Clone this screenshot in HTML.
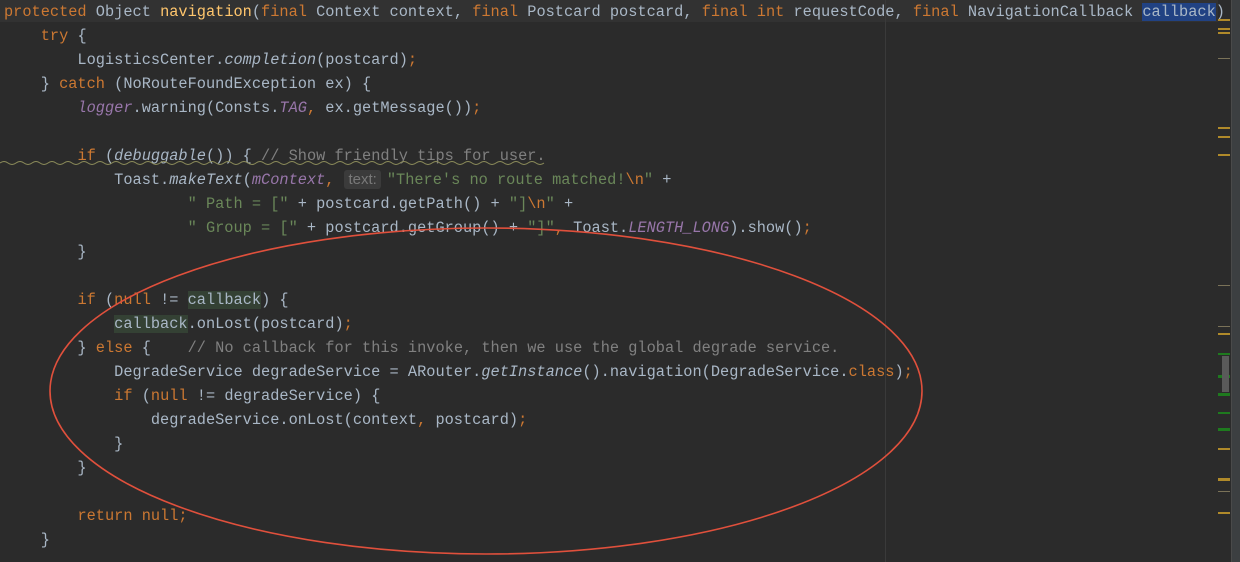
<!DOCTYPE html>
<html><head><meta charset="utf-8"><style>
html,body{margin:0;padding:0;background:#2b2b2b;width:1240px;height:562px;overflow:hidden}
pre{position:absolute;left:4px;top:0px;margin:0;font-family:"Liberation Mono",monospace;font-size:15.3px;line-height:24px;color:#a9b7c6;white-space:pre}
.k{color:#cc7832}.s{color:#6a8759}.c{color:#808080}.m{color:#ffc66d}.f{color:#9876aa;font-style:italic}.i{font-style:italic}
.hl{background:#344134}.sel{background:#214283}
.hint{display:inline-block;background:#3b3b3b;color:#787878;font-family:"Liberation Sans",sans-serif;font-size:15px;line-height:19px;padding:0 4px;border-radius:3px;margin:0 6px 0 10px}
.cur{position:absolute;left:0;top:0;width:1218px;height:22px;background:#323232}
.guide{position:absolute;left:885px;top:0;width:1px;height:562px;background:#3a3a3a}
.side{position:absolute;left:1231px;top:0;width:9px;height:562px;background:#3c3f41;border-left:1px solid #4a4a4a}
.mk{position:absolute;left:1218px;width:12px;height:2px}
</style></head><body>
<div class="cur"></div>
<div class="guide"></div>
<pre><span class="k">protected </span>Object <span class="m">navigation</span>(<span class="k">final </span>Context context, <span class="k">final </span>Postcard postcard, <span class="k">final int </span>requestCode, <span class="k">final </span>NavigationCallback <span class="sel">callback</span>)
    <span class="k">try </span>{
        LogisticsCenter.<span class="i">completion</span>(postcard)<span class="k">;</span>
    } <span class="k">catch </span>(NoRouteFoundException ex) {
        <span class="f">logger</span>.warning(Consts.<span class="f">TAG</span><span class="k">, </span>ex.getMessage())<span class="k">;</span>

        <span class="k">if </span>(<span class="i">debuggable</span>()) { <span class="c">// Show friendly tips for user.</span>
            Toast.<span class="i">makeText</span>(<span class="f">mContext</span><span class="k">,</span><span class="hint">text:</span><span class="s">"There's no route matched!<span class="k">\n</span>"</span> +
                    <span class="s">" Path = ["</span> + postcard.getPath() + <span class="s">"]<span class="k">\n</span>"</span> +
                    <span class="s">" Group = ["</span> + postcard.getGroup() + <span class="s">"]"</span><span class="k">, </span>Toast.<span class="f">LENGTH_LONG</span>).show()<span class="k">;</span>
        }

        <span class="k">if </span>(<span class="k">null </span>!= <span class="hl">callback</span>) {
            <span class="hl">callback</span>.onLost(postcard)<span class="k">;</span>
        } <span class="k">else </span>{    <span class="c">// No callback for this invoke, then we use the global degrade service.</span>
            DegradeService degradeService = ARouter.<span class="i">getInstance</span>().navigation(DegradeService.<span class="k">class</span>)<span class="k">;</span>
            <span class="k">if </span>(<span class="k">null </span>!= degradeService) {
                degradeService.onLost(context<span class="k">, </span>postcard)<span class="k">;</span>
            }
        }

        <span class="k">return null;</span>
    }</pre>
<svg style="position:absolute;left:0;top:0" width="1240" height="562"><path d="M0 163 q4 -3 8 0 t8 0 t8 0 t8 0 t8 0 t8 0 t8 0 t8 0 t8 0 t8 0 t8 0 t8 0 t8 0 t8 0 t8 0 t8 0 t8 0 t8 0 t8 0 t8 0 t8 0 t8 0 t8 0 t8 0 t8 0 t8 0 t8 0 t8 0 t8 0 t8 0 t8 0 t8 0 t8 0 t8 0 t8 0 t8 0 t8 0 t8 0 t8 0 t8 0 t8 0 t8 0 t8 0 t8 0 t8 0 t8 0 t8 0 t8 0 t8 0 t8 0 t8 0 t8 0 t8 0 t8 0 t8 0 t8 0 t8 0 t8 0 t8 0 t8 0 t8 0 t8 0 t8 0 t8 0 t8 0 t8 0 t8 0 t8 0" fill="none" stroke="#8c8c5a" stroke-width="1"/>
<ellipse cx="486" cy="391" rx="436" ry="163" fill="none" stroke="#e0503c" stroke-width="1.6"/></svg>
<div class="mk" style="top:19px;background:#b08a2a"></div><div class="mk" style="top:28px;background:#b08a2a"></div><div class="mk" style="top:32px;background:#b08a2a"></div>
<div class="mk" style="top:58px;background:#7a7258;height:1px"></div>
<div class="mk" style="top:127px;background:#b08a2a"></div><div class="mk" style="top:136px;background:#b08a2a"></div><div class="mk" style="top:154px;background:#b08a2a"></div>
<div class="mk" style="top:285px;background:#7a7258;height:1px"></div><div class="mk" style="top:326px;background:#7a7258;height:1px"></div><div class="mk" style="top:333px;background:#b08a2a"></div>
<div class="mk" style="top:353px;background:#1e7a1e"></div><div class="mk" style="top:375px;background:#1e7a1e;height:3px"></div><div class="mk" style="top:393px;background:#1e7a1e;height:3px"></div>
<div class="mk" style="top:412px;background:#1e7a1e"></div><div class="mk" style="top:428px;background:#1e7a1e;height:3px"></div><div class="mk" style="top:448px;background:#b08a2a"></div>
<div class="mk" style="top:478px;background:#b08a2a;height:3px"></div><div class="mk" style="top:491px;background:#7a7258;height:1px"></div><div class="mk" style="top:512px;background:#b08a2a"></div>
<div style="position:absolute;left:1222px;top:356px;width:7px;height:36px;background:#5a5a5a"></div>
<div class="side"></div>
</body></html>
